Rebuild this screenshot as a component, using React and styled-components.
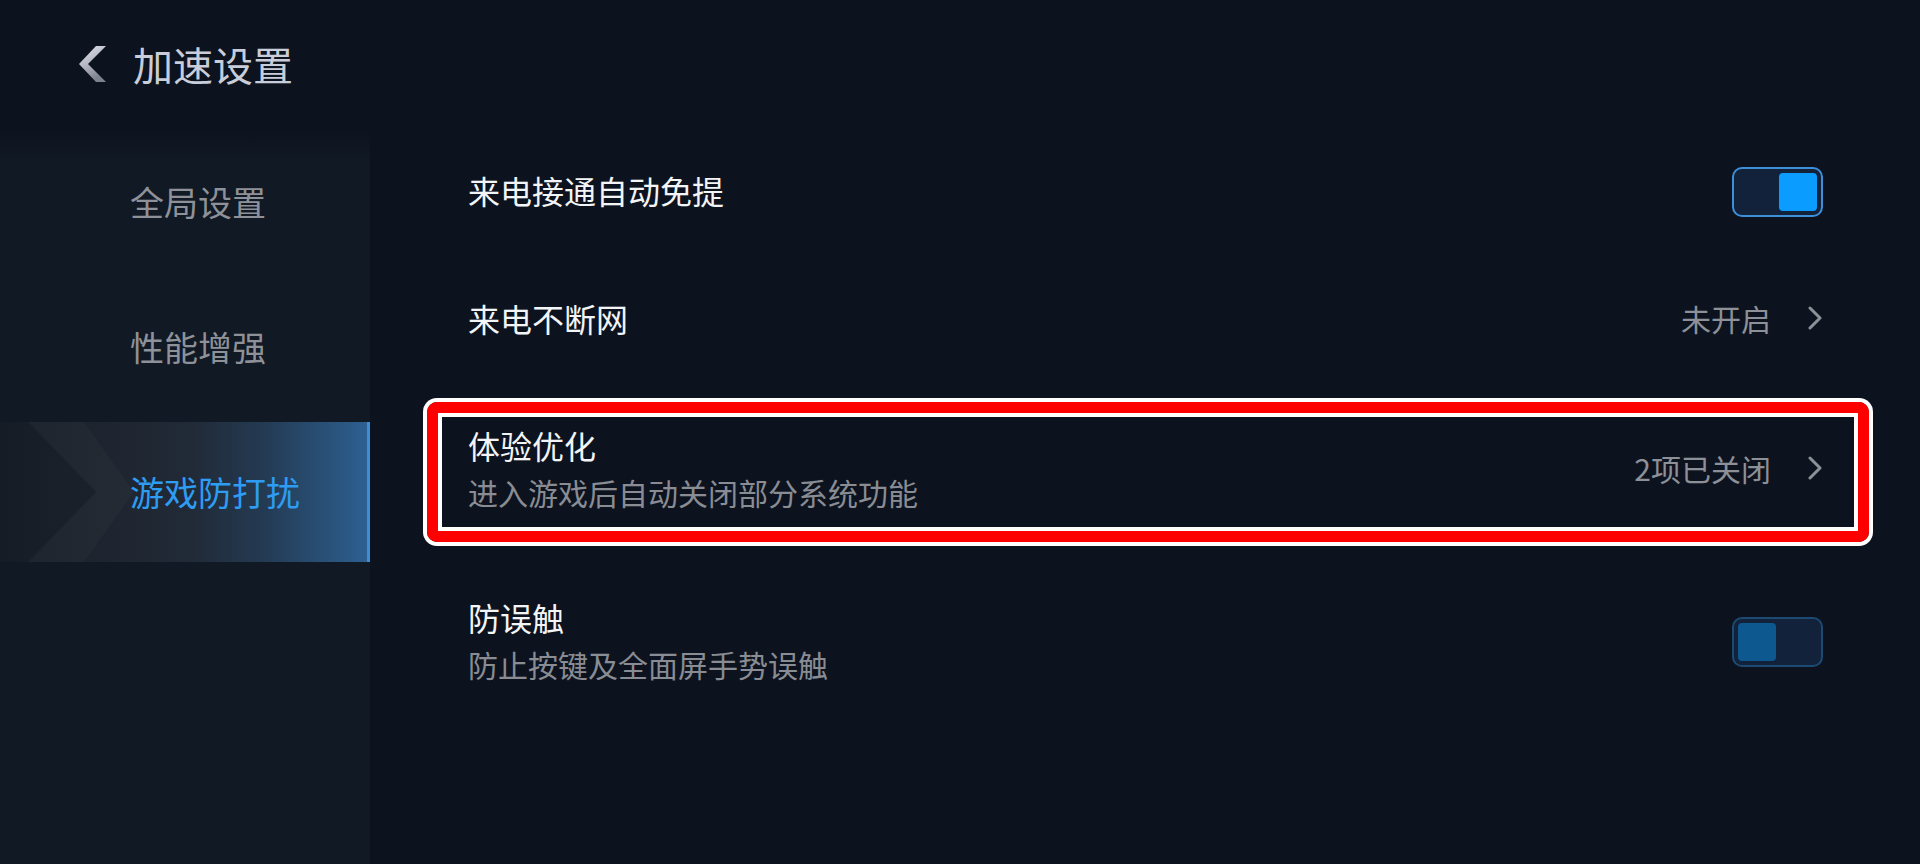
import React from "react";
import styled, { createGlobalStyle, css } from "styled-components";

const GlobalStyle = createGlobalStyle`
  html, body {
    margin: 0;
    padding: 0;
    background: #0c131f;
  }
  body {
    font-family: "Noto Sans CJK SC", "Noto Sans", sans-serif;
    -webkit-font-smoothing: antialiased;
  }
`;

const Page = styled.div`
  width: 100%;
  height: 864px;
  display: flex;
  flex-direction: column;
  overflow: hidden;
  background: #0c131f;
`;

const Header = styled.header`
  height: 128px;
  flex-shrink: 0;
  display: flex;
  align-items: center;
  gap: 27px;
  padding-left: 79px;
`;

const BackButton = styled.button`
  display: flex;
  align-items: center;
  padding: 0;
  margin: 0;
  border: 0;
  background: none;
  cursor: pointer;
`;

const PageTitle = styled.h1`
  margin: 0;
  font-size: 40px;
  font-weight: 400;
  line-height: 1;
  color: #c9ccd9;
`;

const Body = styled.div`
  flex: 1;
  display: flex;
  min-height: 0;
`;

const Sidebar = styled.nav`
  width: 370px;
  flex-shrink: 0;
  display: flex;
  flex-direction: column;
  gap: 5px;
  padding-top: 4px;
  background: linear-gradient(
    180deg,
    rgba(17, 25, 37, 0) 0px,
    rgba(17, 25, 37, 0.6) 20px,
    #111925 36px
  );
`;

const NavItem = styled.div`
  position: relative;
  height: 140px;
  display: flex;
  align-items: center;
  padding-left: 130px;
  font-size: 34px;
  color: #8f9198;
  cursor: pointer;

  ${(p) =>
    p.$active &&
    css`
      color: #2e9cf2;
      background: linear-gradient(
        90deg,
        #181e28 0%,
        #1e2530 30%,
        #212a37 52%,
        #243b54 72%,
        #2a5680 92%,
        #2e6196 100%
      );
      box-shadow: inset -3px 0 0 #3a8fd8;

      &::before {
        content: "";
        position: absolute;
        inset: 0;
        background: rgba(255, 255, 255, 0.025);
        clip-path: polygon(28px 0, 84px 0, 134px 50%, 84px 100%, 28px 100%, 96px 50%);
      }
      &::after {
        content: "";
        position: absolute;
        inset: 0;
        background: rgba(0, 0, 0, 0.06);
        clip-path: polygon(0 0, 28px 0, 96px 50%, 28px 100%, 0 100%);
      }
    `}
`;

const NavLabel = styled.span`
  position: relative;
  z-index: 1;
  line-height: 1;
`;

const Content = styled.main`
  flex: 1;
  display: flex;
  flex-direction: column;
  padding: 0 97px 0 98px;
`;

const Row = styled.div`
  position: relative;
  display: flex;
  align-items: center;
  justify-content: space-between;
  min-height: ${(p) => (p.$tall ? 172 : 128)}px;

  ${(p) =>
    p.$marked &&
    css`
      &::after {
        content: "";
        position: absolute;
        left: -41px;
        right: -46px;
        top: 18px;
        bottom: 14px;
        border: 11px solid #ff0000;
        border-radius: 10px;
        box-shadow: 0 0 0 4px #ffffff, inset 0 0 0 4px #ffffff;
        pointer-events: none;
      }
    `}
`;

const TextBlock = styled.div`
  display: flex;
  flex-direction: column;
  margin-bottom: 4px;
`;

const Title = styled.div`
  font-size: 32px;
  line-height: 48px;
  color: #f3f4f6;
`;

const Subtitle = styled.div`
  font-size: 30px;
  line-height: 46px;
  color: #898c93;
`;

const Trailing = styled.div`
  display: flex;
  align-items: center;
  gap: 36px;
  margin-bottom: 4px;
`;

const Value = styled.span`
  font-size: 30px;
  line-height: 1;
  color: #8d9097;
`;

const SwitchTrack = styled.div`
  width: 91px;
  height: 50px;
  box-sizing: border-box;
  border: 2px solid ${(p) => (p.$on ? "#3d8fd9" : "#1d4a73")};
  border-radius: 10px;
  background: #12223a;
  padding: 4px;
  display: flex;
  justify-content: ${(p) => (p.$on ? "flex-end" : "flex-start")};
`;

const SwitchKnob = styled.div`
  width: 38px;
  height: 38px;
  border-radius: 4px;
  background: ${(p) => (p.$on ? "#0a9cff" : "#0e5890")};
`;

const BackIcon = () => (
  <svg width="27" height="36" viewBox="0 0 27 36">
    <defs>
      <linearGradient id="backGrad" x1="0" y1="0" x2="0.4" y2="1">
        <stop offset="0" stopColor="#e2e4ec" />
        <stop offset="0.55" stopColor="#b4b7c3" />
        <stop offset="1" stopColor="#7e818e" />
      </linearGradient>
    </defs>
    <polygon points="17,0 27,0 9,18 27,36 17,36 0,18" fill="url(#backGrad)" />
  </svg>
);

const ChevronRight = () => (
  <svg width="16" height="24" viewBox="0 0 16 24">
    <polyline
      points="3,2 13,12 3,22"
      fill="none"
      stroke="#8d9097"
      strokeWidth="3"
      strokeLinecap="round"
      strokeLinejoin="round"
    />
  </svg>
);

const Switch = ({ on }) => (
  <SwitchTrack $on={on}>
    <SwitchKnob $on={on} />
  </SwitchTrack>
);

const navItems = ["全局设置", "性能增强", "游戏防打扰"];

const settings = [
  { title: "来电接通自动免提", control: "switch", on: true },
  { title: "来电不断网", control: "link", value: "未开启" },
  {
    title: "体验优化",
    subtitle: "进入游戏后自动关闭部分系统功能",
    control: "link",
    value: "2项已关闭",
    marked: true,
  },
  {
    title: "防误触",
    subtitle: "防止按键及全面屏手势误触",
    control: "switch",
    on: false,
  },
];

export default function App() {
  return (
    <>
      <GlobalStyle />
      <Page>
        <Header>
          <BackButton aria-label="返回">
            <BackIcon />
          </BackButton>
          <PageTitle>加速设置</PageTitle>
        </Header>
        <Body>
          <Sidebar>
            {navItems.map((label, i) => (
              <NavItem key={label} $active={i === 2}>
                <NavLabel>{label}</NavLabel>
              </NavItem>
            ))}
          </Sidebar>
          <Content>
            {settings.map((s) => (
              <Row key={s.title} $tall={!!s.subtitle} $marked={s.marked}>
                <TextBlock>
                  <Title>{s.title}</Title>
                  {s.subtitle && <Subtitle>{s.subtitle}</Subtitle>}
                </TextBlock>
                {s.control === "switch" ? (
                  <Switch on={s.on} />
                ) : (
                  <Trailing>
                    <Value>{s.value}</Value>
                    <ChevronRight />
                  </Trailing>
                )}
              </Row>
            ))}
          </Content>
        </Body>
      </Page>
    </>
  );
}
